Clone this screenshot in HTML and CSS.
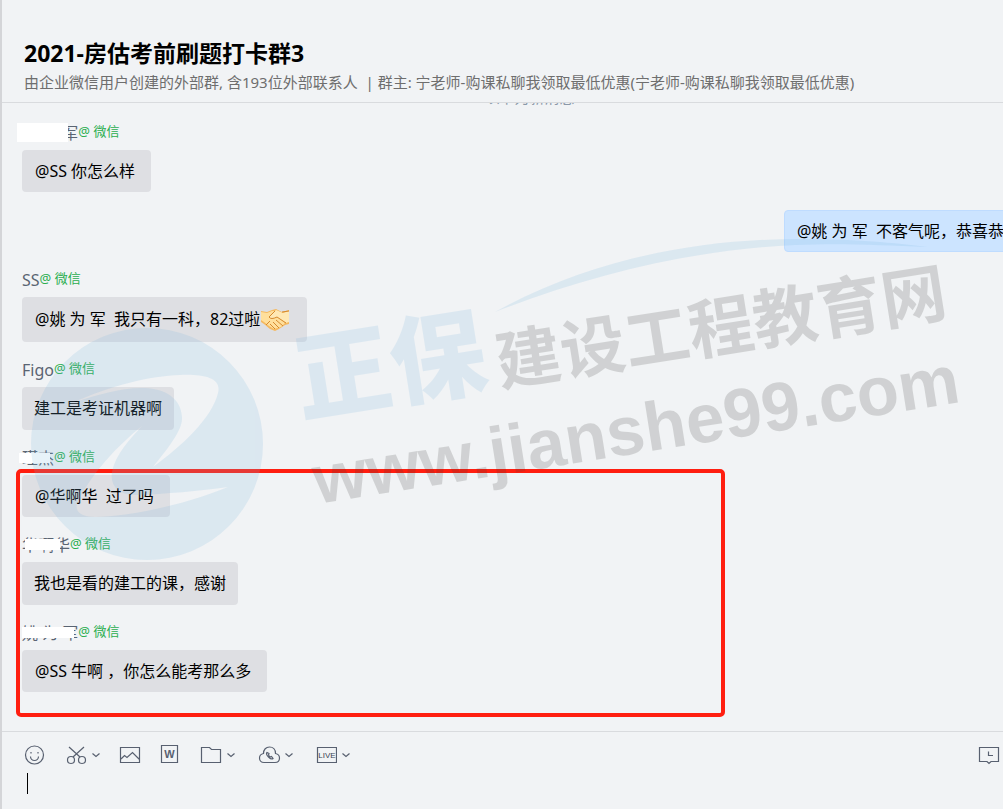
FILE: index.html
```html
<!DOCTYPE html>
<html lang="zh-CN">
<head>
    <meta charset="UTF-8">
    <meta name="viewport" content="width=device-width, initial-scale=1.0">
    <title>2021-房估考前刷题打卡群3</title>
    <link rel="stylesheet" href="styles.css">
</head>
<body>
    <div class="chat">
        <header class="header">
            <h1>2021-房估考前刷题打卡群3</h1>
            <p>由企业微信用户创建的外部群, 含193位外部联系人  | 群主: 宁老师-购课私聊我领取最低优惠(宁老师-购课私聊我领取最低优惠)</p>
        </header>

        <main class="messages">
            <div class="divider">以下为新消息</div>

            <div class="message">
                <div class="sender"><span class="name">姚 为 军</span><span class="source">@ 微信</span><i class="mask mask-large"></i></div>
                <div class="bubble">@SS 你怎么样</div>
            </div>

            <div class="message mine">
                <div class="bubble">@姚 为 军  不客气呢，恭喜恭</div>
            </div>

            <div class="message">
                <div class="sender"><span class="name">SS</span><span class="source">@ 微信</span></div>
                <div class="bubble has-emoji">@姚 为 军  我只有一科，82过啦<svg class="emoji" viewBox="0 0 28 22" role="img" aria-label="握手">
                    <path d="M0 2 L6 3 L11 1 L15 0 L21 3 L28 1 V15 L24 16 L18 20 L14 22 L9 20 L3 15 L0 13 Z" fill="#f5b95f"/>
                    <path d="M0 3 L6 4 L11 2 L14 2 L8 8 L11 10 L16 8 L24 14 L20 18 L13 20 L8 17 L3 13 L0 11 Z" fill="#ffdf9c"/>
                    <path d="M28 2 L22 4 L15 1 L8 8 Q10 11 16 8 L25 14 L28 13 Z" fill="#ffe8b4"/>
                    <path d="M14 2 L8 8 Q10 11 16 8 L25 14 M15 11 L22 17 M12 13 L18 19 M9 15 L14 20 M5 16 L9 12 M21 3 L28 2" fill="none" stroke="#d58a30" stroke-width="1"/>
                </svg></div>
            </div>

            <div class="message">
                <div class="sender"><span class="name">Figo</span><span class="source">@ 微信</span></div>
                <div class="bubble plain">建工是考证机器啊</div>
            </div>

            <div class="message">
                <div class="sender"><span class="name">瑾杰</span><span class="source">@ 微信</span><i class="mask mask-short"></i></div>
                <div class="bubble">@华啊华  过了吗</div>
            </div>

            <div class="message">
                <div class="sender"><span class="name">华啊华</span><span class="source">@ 微信</span><i class="mask mask-mid"></i></div>
                <div class="bubble plain">我也是看的建工的课，感谢</div>
            </div>

            <div class="message">
                <div class="sender"><span class="name">姚 为 军</span><span class="source">@ 微信</span><i class="mask mask-long"></i></div>
                <div class="bubble">@SS 牛啊 ，你怎么能考那么多</div>
            </div>

            <div class="highlight"></div>
        </main>

        <footer class="composer">
            <div class="toolbar">
                <button type="button" aria-label="表情">
                    <svg width="24" height="24" viewBox="0 0 24 24"><circle cx="11.5" cy="12" r="9"/><path d="M7.5 13.5a4 4 0 0 0 8 0M8 9v1.5M15 9v1.5"/></svg>
                </button>
                <button type="button" aria-label="截图">
                    <svg width="24" height="24" viewBox="0 0 24 24"><circle cx="7" cy="17" r="3.5"/><circle cx="18" cy="17" r="3.5"/><path d="M5 4 16 14M20 4 9 14"/></svg>
                    <svg width="14" height="24" viewBox="0 0 14 24"><path d="M4.5 10.5 8 13.5l3.5-3"/></svg>
                </button>
                <button type="button" aria-label="图片">
                    <svg width="24" height="24" viewBox="0 0 24 24"><path d="M1.5 4.5h19v15h-19zM2 16l3.5-3.5 2.5 2 5.5-5 7 7"/></svg>
                </button>
                <button type="button" aria-label="文档">
                    <svg width="22" height="24" viewBox="0 0 22 24"><path d="M1.5 2.5h16v17h-16z"/><text x="9.5" y="15" font-size="11">W</text></svg>
                </button>
                <button type="button" aria-label="文件">
                    <svg width="24" height="24" viewBox="0 0 24 24"><path d="M2.5 4.5h8l2 2h9v13h-19z"/></svg>
                    <svg width="14" height="24" viewBox="0 0 14 24"><path d="M4.5 10.5 8 13.5l3.5-3"/></svg>
                </button>
                <button type="button" aria-label="语音通话">
                    <svg width="28" height="24" viewBox="0 0 28 24"><path d="M10 19.5c-3 0-4.5-2-4.5-4.5s1.5-4 4-4.500c0-4 2.500-6.500 6-6.500s6 2.500 6 6.500c2.500.5 4 2 4 4.500s-1.500 4.500-4.500 4.500z"/><path d="M13 9.5c-1 1 0 3 1.5 4.5s3.500 2.500 4.500 1.500l-1.500-2-1.500.5-1.500-2 .5-1.500z"/></svg>
                    <svg width="14" height="24" viewBox="0 0 14 24"><path d="M3.5 10.5 7 13.5l3.5-3"/></svg>
                </button>
                <button type="button" aria-label="直播">
                    <svg width="24" height="24" viewBox="0 0 24 24"><path d="M4.5 4.5h19v15h-19z"/><text class="live" x="14" y="15" font-size="8">LIVE</text></svg>
                    <svg width="14" height="24" viewBox="0 0 14 24"><path d="M5.5 10.5 9 13.5l3.5-3"/></svg>
                </button>
                <button type="button" class="history" aria-label="聊天记录">
                    <svg width="24" height="24" viewBox="0 0 24 24"><path d="M2.5 4.5h19v14H14l-2 2-2-2H2.5zM11.500 8.500v4H16"/></svg>
                </button>
            </div>
            <div class="editor">
                <textarea aria-label="输入消息"></textarea>
                <i class="caret"></i>
            </div>
        </footer>

        <svg class="watermark" aria-hidden="true">
            <g class="tint">
                <path fill-rule="evenodd" d="M147 328a116 116 0 1 1 0 232a116 116 0 1 1 0-232z
                    M72 403C112 385 150 376 180 375C204 374 222 378 218 393C212 418 182 446 153 467C168 448 183 430 182 417C181 398 165 389 145 388C124 387 96 395 72 403z
                    M142 426C116 447 92 473 78 501C73 512 82 517 95 517C130 517 190 503 228 487C200 491 165 494 135 495C118 495 110 486 112 472C115 455 130 439 142 426z"/>
                <path d="M495 312C585 262 690 239 800 239C855 239 895 243 928 247C880 245 840 243 795 245C690 250 590 275 495 312z"/>
                <text class="brand" transform="translate(301 415) rotate(-9)">正保</text>
            </g>
            <g class="shade">
                <text class="site" transform="translate(500 386) rotate(-9)">建设工程教育网</text>
                <text class="url" transform="translate(317 504) rotate(-9)">www.jianshe99.com</text>
            </g>
        </svg>
    </div>
</body>
</html>
```
FILE: styles.css
```css
* { margin: 0; padding: 0; box-sizing: border-box; }
body {
    font-family: "Noto Sans", "Noto Sans CJK SC", sans-serif;
    background: #f1f3f5; color: #000;
}
.chat {
    position: relative; display: flex; flex-direction: column;
    height: 100vh; overflow: hidden; border-left: 2px solid #d4d5d8;
}

/* header */
.header { padding: 38px 22px 6px; border-bottom: 1px solid #d9dbde; }
.header h1, .header p { white-space: pre; }
.header h1 { font-size: 23px; line-height: 30px; font-family: "Open Sans", "Noto Sans CJK SC", sans-serif; }
.header p { font-size: 15px; line-height: 28px; color: #6e6e6e; }

/* messages */
.messages {
    position: relative; flex: 1; min-height: 0; overflow: hidden;
    display: flex; flex-direction: column; gap: 18px; padding: 0 20px;
}
/* scrolled almost out of view under the header */
.divider { margin: -14px 0 0 54px; font-size: 15px; line-height: 16px; text-align: center; color: #8a98a8; }
.message { display: flex; flex-direction: column; align-items: flex-start; }
.mine { align-items: flex-end; margin-right: -37px; }
.sender { position: relative; display: flex; line-height: 27px; white-space: pre; }
.name { font-size: 16px; line-height: 21px; color: #5a6472; }
.source { font-size: 13px; line-height: 16px; height: 27px; color: #2aae4f; }
.bubble {
    padding: 10px 16px 10px 13px; font-size: 16px; line-height: 22px;
    background: #dedfe3; border-radius: 4px; white-space: pre;
}
.plain { padding: 10px 12px; line-height: 23px; }
.has-emoji { display: flex; align-items: center; line-height: 25px; }
.mine .bubble { background: #cce4ff; border: 1px solid #bfdcff; padding: 9px 15px 9px 12px; }
.emoji { width: 28px; height: 22px; margin: 0 2px 0 1px; }

/* covered member names */
.mask { position: absolute; background: #fff; }
.mask-large { left: -5px; top: 0; width: 51px; height: 19px; }
.mask-short { left: -3px; top: 5px; width: 31px; height: 10px; }
.mask-mid { left: 3px; top: 4px; width: 35px; height: 11px; }
.mask-long { left: 0; top: 4px; width: 52px; height: 11px; }

.highlight {
    position: absolute; left: 14px; top: 366px; width: 709px; height: 248px;
    border: 4px solid #ff1e10; border-radius: 5px;
}

/* composer */
.composer { height: 78px; border-top: 1px solid #d9dbde; }
.toolbar { display: flex; gap: 17px; padding: 11px 2px 0 21px; }
.toolbar button { display: flex; border: none; background: none; }
.toolbar svg { display: block; fill: none; stroke: #586070; stroke-width: 1.2; }
.toolbar text {
    fill: #586070; stroke: none; text-anchor: middle;
    font-family: "Liberation Sans", sans-serif; font-weight: bold;
}
.toolbar .live { font-weight: normal; fill: #3c4452; }
.toolbar .history { margin-left: auto; }
.editor { position: relative; height: 42px; }
.editor textarea {
    width: 100%; height: 100%; padding: 6px 25px; border: none; outline: none;
    resize: none; background: none; font: inherit;
}
.caret { position: absolute; left: 25px; top: 6px; width: 1px; height: 21px; background: #000; }

/* watermark */
.watermark { position: absolute; left: -2px; top: 0; width: 100%; height: 100%; pointer-events: none; }
.tint { fill: #7cb6df; opacity: 0.18; }
.shade { fill: #3f3f3c; opacity: 0.18; }
.brand { font-size: 96px; font-weight: 900; font-family: "Noto Sans CJK SC", sans-serif; }
.site { font-size: 65px; font-weight: 700; font-family: "Noto Sans CJK SC", sans-serif; }
.url { font-size: 69px; font-weight: 700; font-family: "Liberation Sans", sans-serif; }
```
